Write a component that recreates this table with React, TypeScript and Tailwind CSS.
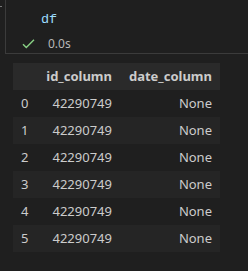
import React from 'react';

const rows = [0, 1, 2, 3, 4, 5].map((i) => ({ idx: i, id: '42290749', date: 'None' }));

function CheckIcon() {
    return (
        <svg width="13" height="10" viewBox="0 0 13 10" fill="none">
            <path d="M1 5.2 L4.3 8.5 L12 0.8" stroke="#89d185" strokeWidth="1.4" />
        </svg>
    );
}

export default function App() {
    return (
        <div className="w-[248px] h-[271px] bg-[#1f1f1f] overflow-hidden relative" style={{ fontFamily: '"Noto Sans", "Open Sans", sans-serif' }}>
            <div className="absolute left-0 top-[6px] w-[2px] h-[1px] bg-[#7a7a7a]" />
            <div className="ml-[5px] h-[54px] border-l border-b border-[#3b3b3b] w-[260px]">
                <div className="pl-[35px] pt-[12px] h-[30px] text-[13.5px] leading-[16px] text-[#9cdcfe]" style={{ fontFamily: '"Liberation Mono", "DejaVu Sans Mono", monospace' }}>
                    df
                </div>
                <div className="flex items-center h-[14px] mt-[7px] pl-[16px] gap-[13px]">
                    <CheckIcon />
                    <span className="text-[12px] text-[#b8b8b8] leading-[14px]">0.0s</span>
                </div>
            </div>
            <table className="ml-[13px] mt-[9px] border-collapse text-[13px] text-[#cccccc]">
                <thead className="bg-[#2a2a2a]">
                    <tr className="h-[27px]">
                        <th className="w-[24px] p-0" />
                        <th className="w-[83px] px-2 text-right font-bold">id_column</th>
                        <th className="w-[100px] px-2 text-right font-bold">date_column</th>
                    </tr>
                </thead>
                <tbody>
                    {rows.map((r) => (
                        <tr key={r.idx} className={r.idx % 2 === 1 ? 'h-[27px] bg-[#252525]' : 'h-[27px]'}>
                            <td className="pl-2 text-left">{r.idx}</td>
                            <td className="px-2 text-right">{r.id}</td>
                            <td className="px-2 text-right">{r.date}</td>
                        </tr>
                    ))}
                </tbody>
            </table>
        </div>
    );
}
